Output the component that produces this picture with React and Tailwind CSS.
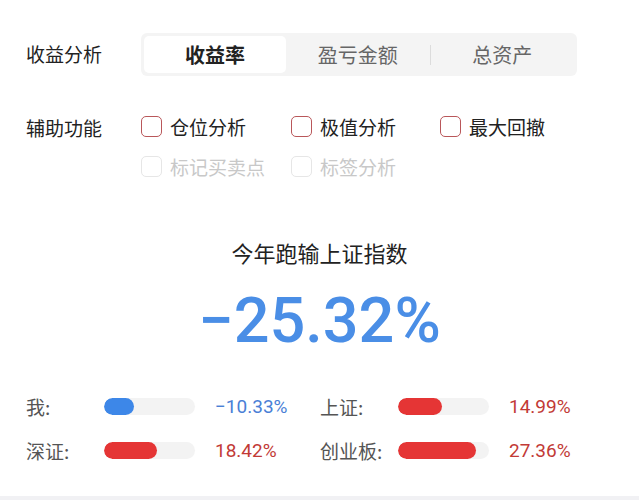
const font = { fontFamily: '"Noto Sans CJK SC", "Noto Sans", sans-serif' };

function Checkbox({ label, disabled }) {
  return (
    <div className="flex items-center gap-[8px]">
      <span
        className={`h-[21px] w-[21px] rounded-[5px] border-[1.5px] bg-white ${disabled ? 'border-[#e6e6e6]' : 'border-[#b9575a]'}`}
      />
      <span className={`text-[19px] leading-none ${disabled ? 'text-[#c8c8c8]' : 'text-[#222]'}`}>{label}</span>
    </div>
  );
}

function Stat({ label, pct, value, color, bar }) {
  return (
    <div className="flex items-center">
      <span className="w-[78px] text-[19px] leading-none text-[#555]">{label}</span>
      <div className="h-[17px] w-[91px] overflow-hidden rounded-full bg-[#f3f3f3]">
        <div className={`h-full rounded-full ${bar}`} style={{ width: `${pct}%` }} />
      </div>
      <span className={`ml-[20px] font-['Roboto'] text-[19px] leading-none ${color}`}>{value}</span>
    </div>
  );
}

export default function App() {
  return (
    <div className="flex h-[500px] w-[639px] flex-col bg-white" style={font}>
      <div className="flex flex-1 flex-col px-[26px]">
        <div className="mt-[33px] flex items-center">
          <span className="w-[115px] text-[19px] text-[#222]">收益分析</span>
          <div className="flex h-[43px] w-[436px] items-center rounded-[6px] bg-[#f4f4f4] px-[3px]">
            <div className="flex h-[37px] w-[142px] items-center justify-center rounded-[5px] bg-white text-[20px] font-bold text-[#222]">
              收益率
            </div>
            <div className="flex flex-1 items-center justify-center text-[20px] text-[#666]">盈亏金额</div>
            <div className="h-[20px] w-px bg-[#dcdcdc]" />
            <div className="flex flex-1 items-center justify-center text-[20px] text-[#666]">总资产</div>
          </div>
        </div>

        <div className="mt-[40px] flex">
          <span className="w-[115px] pt-[2px] text-[19px] leading-none text-[#222]">辅助功能</span>
          <div className="grid grid-cols-[150px_149px_150px] gap-y-[19px]">
            <Checkbox label="仓位分析" />
            <Checkbox label="极值分析" />
            <Checkbox label="最大回撤" />
            <Checkbox label="标记买卖点" disabled />
            <Checkbox label="标签分析" disabled />
          </div>
        </div>

        <div className="mt-[64px] flex flex-col items-center">
          <span className="text-[22px] leading-none text-[#222]">今年跑输上证指数</span>
          <span className="mt-[26px] font-['Roboto'] text-[63px] font-medium leading-none text-[#4a8ee6]">−25.32%</span>
        </div>

        <div className="mt-[45px] grid grid-cols-[294px_1fr] gap-y-[25px]">
          <Stat label="我:" pct={33} value="−10.33%" color="text-[#4a7fd6]" bar="bg-[#3d87e8]" />
          <Stat label="上证:" pct={48} value="14.99%" color="text-[#c23a36]" bar="bg-[#e53535]" />
          <Stat label="深证:" pct={58} value="18.42%" color="text-[#c23a36]" bar="bg-[#e53535]" />
          <Stat label="创业板:" pct={86} value="27.36%" color="text-[#c23a36]" bar="bg-[#e53535]" />
        </div>
      </div>
      <div className="h-[4px] bg-[#f1f1f4]" />
    </div>
  );
}
